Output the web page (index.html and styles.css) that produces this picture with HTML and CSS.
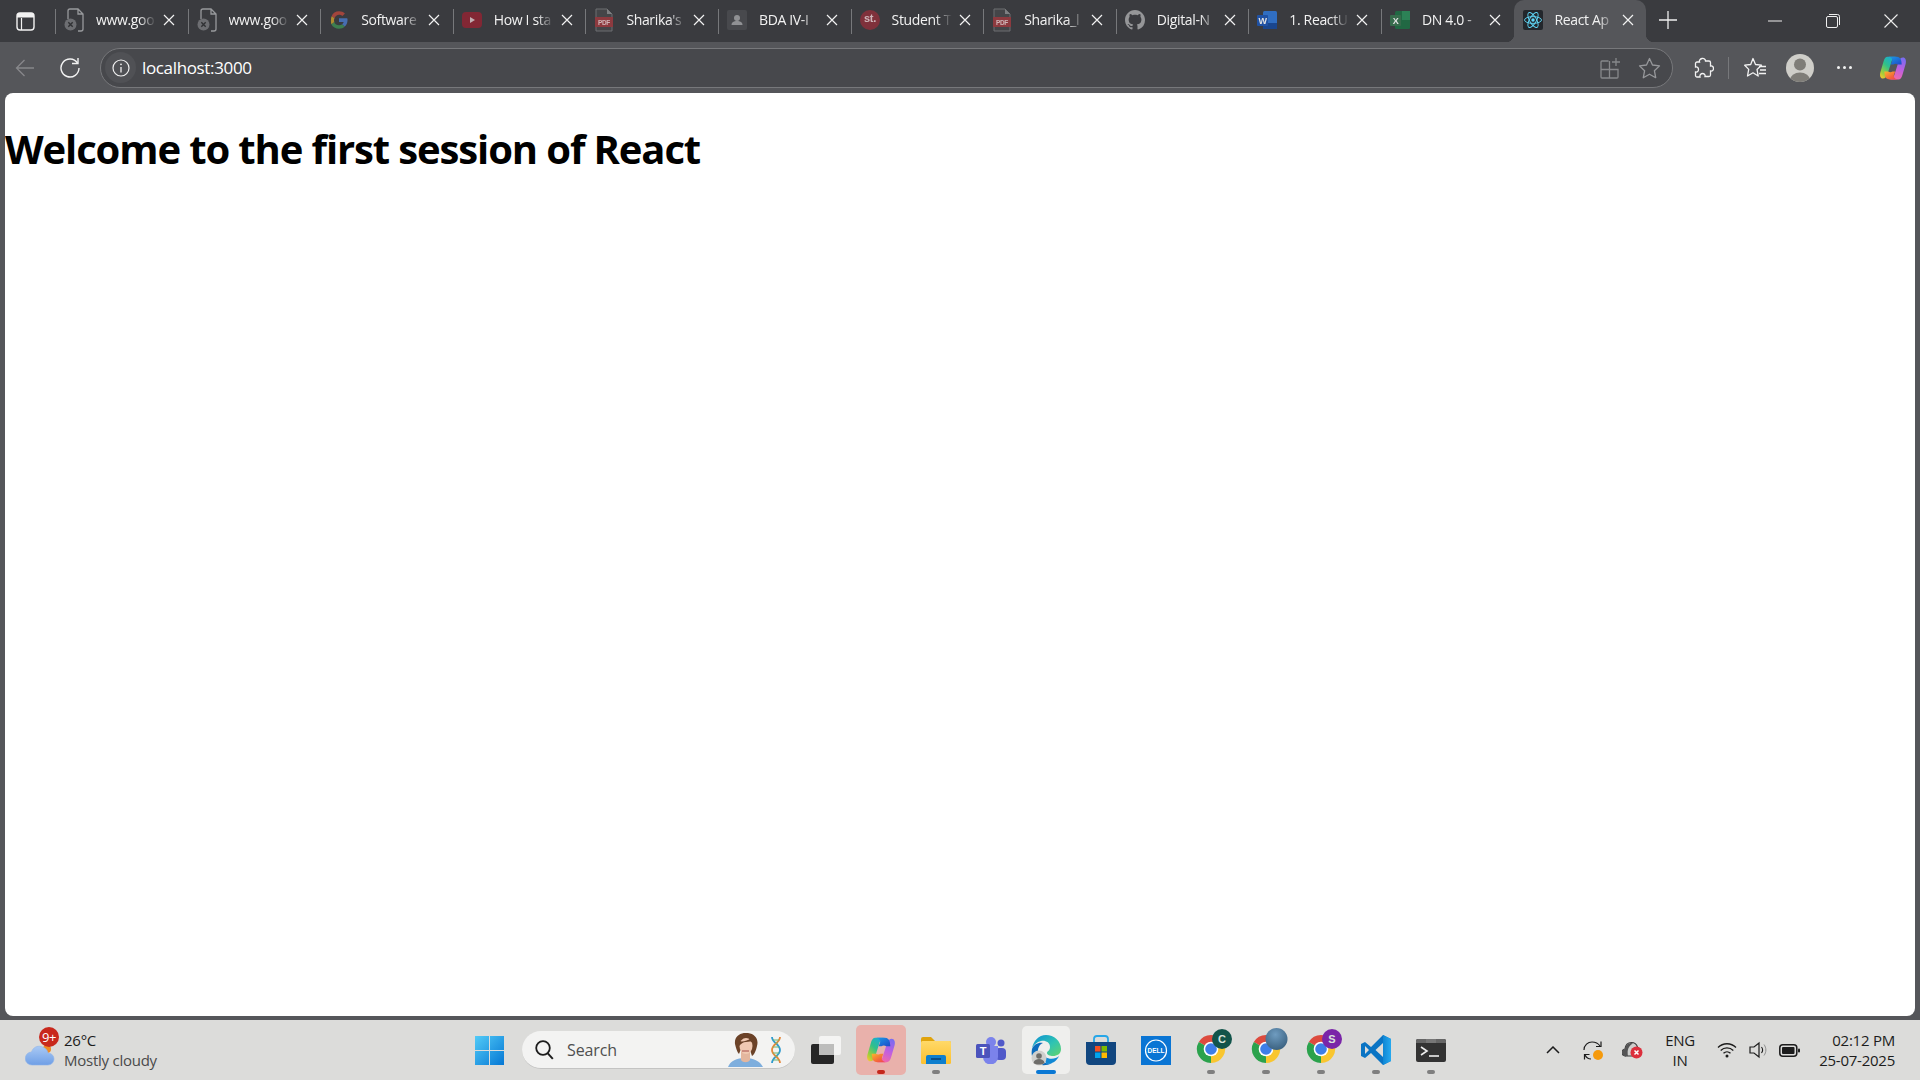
FILE: index.html
```html
<!DOCTYPE html>
<html lang="en">
<head>
<meta charset="utf-8">
<title>React App</title>
<link rel="stylesheet" href="styles.css">
</head>
<body>
<svg class="defs" width="0" height="0" aria-hidden="true">
  <defs>
    <linearGradient id="cop1" x1=".8" y1="0" x2=".1" y2="1"><stop offset="0" stop-color="#18a8e0"/><stop offset=".45" stop-color="#2fc08a"/><stop offset=".8" stop-color="#9fcf3a"/><stop offset="1" stop-color="#f7c531"/></linearGradient>
    <linearGradient id="cop2" x1=".7" y1="0" x2=".3" y2="1"><stop offset="0" stop-color="#7b6cf0"/><stop offset=".5" stop-color="#c05fe0"/><stop offset="1" stop-color="#f56aa5"/></linearGradient>
    <linearGradient id="cop3" x1="0" y1="0" x2="1" y2="1"><stop offset="0" stop-color="#f9b62c"/><stop offset=".6" stop-color="#f5683a"/><stop offset="1" stop-color="#ee3f5e"/></linearGradient>
    <linearGradient id="cop4" x1="0" y1="0" x2="1" y2="1"><stop offset="0" stop-color="#1c9be6"/><stop offset="1" stop-color="#1f49c8"/></linearGradient>
    <linearGradient id="edge1" x1="0" y1="0" x2="1" y2="1"><stop offset="0" stop-color="#0c8fd6"/><stop offset=".55" stop-color="#2fc4b2"/><stop offset="1" stop-color="#63d36c"/></linearGradient>
    <linearGradient id="win" x1="0" y1="0" x2="1" y2="1"><stop offset="0" stop-color="#52cbf7"/><stop offset="1" stop-color="#0577d4"/></linearGradient>
    <linearGradient id="cloud" x1="0" y1="0" x2="0" y2="1"><stop offset="0" stop-color="#a9c9f4"/><stop offset="1" stop-color="#6f9fe6"/></linearGradient>
    <linearGradient id="vs" x1="0" y1="0" x2="1" y2="0"><stop offset="0" stop-color="#0f86d4"/><stop offset="1" stop-color="#26a9ef"/></linearGradient>
    <linearGradient id="folder" x1="0" y1="0" x2="0" y2="1"><stop offset="0" stop-color="#ffd968"/><stop offset="1" stop-color="#fcc02f"/></linearGradient>
    <radialGradient id="ball" cx=".45" cy=".3" r=".8"><stop offset="0" stop-color="#6f9cc0"/><stop offset="1" stop-color="#345a78"/></radialGradient>
    <symbol id="i-doc" viewBox="0 0 20 24"><path d="M7 1h7l5 5v15a2 2 0 0 1-2 2h-3M4 11V3a2 2 0 0 1 2-2h1M14 1v5h5" fill="none" stroke="#a9aaad" stroke-width="1.3"/><circle cx="6.5" cy="16.5" r="6" fill="#77787b"/><path d="M4.3 14.3l4.4 4.4m0-4.4l-4.4 4.4" stroke="#2f3033" stroke-width="1.4"/></symbol>
    <symbol id="i-pdf" viewBox="0 0 20 24"><path d="M2 1h11l5 5v17H2z" fill="#46474a" stroke="#77787b"/><path d="M13 1v5h5" fill="#8a8b8e"/><rect x="1" y="9" width="18" height="10" fill="#9c3a3f"/><text x="10" y="17" class="svg-pdf" text-anchor="middle">PDF</text></symbol>
    <symbol id="i-chrome" viewBox="0 0 32 32"><path d="M16 16L3 8.500A15 15 0 0 1 29 8.500z" fill="#dd4b3e"/><path d="M16 16L29 8.500A15 15 0 0 1 16 31z" fill="#f9c62f"/><path d="M16 16V31A15 15 0 0 1 3 8.500z" fill="#2ba24c"/><circle cx="16" cy="16" r="7.800" fill="#fff"/><circle cx="16" cy="16" r="6.200" fill="#3d7ee8"/></symbol>
    <symbol id="i-copilot" viewBox="0 0 32 32"><path d="M10 3H20C17 3 15.500 5 14.500 8L10 22C9 26 7 28 4.500 28 2 28 .5 25 1.500 21L5 9C6 5 7.500 3 10 3Z" fill="url(#cop1)"/><path d="M22 29H12C15 29 16.500 27 17.500 24L22 10C23 6 25 4 27.500 4 30 4 31.500 7 30.500 11L27 23C26 27 24.500 29 22 29Z" fill="url(#cop2)"/><path d="M11 3H20C23 3 25 5 25.500 8L26 12H21.500C20 11 18 11 16.500 12H13.500L15 8C15.700 5.500 14 3.500 11 3Z" fill="url(#cop4)"/><path d="M21 29H12C9 29 7 27 6.500 24L6 20H10.500C12 21 14 21 15.500 20H18.500L17 24C16.300 26.500 18 28.500 21 29Z" fill="url(#cop3)"/></symbol>
    <symbol id="i-x" viewBox="0 0 12 12"><path d="M1 1l10 10M11 1L1 11" stroke="#f2f2f2" stroke-width="1.200"/></symbol>
  </defs>
</svg>

<header class="tabstrip">
  <div class="side-btn">
    <svg width="19" height="19" viewBox="0 0 19 19"><rect x="1" y="1" width="17" height="17" rx="3" fill="none" stroke="#f2f2f2" stroke-width="1.4"/><path d="M1 5.500h17V4a3 3 0 0 0-3-3H4a3 3 0 0 0-3 3z" fill="#f2f2f2"/><path d="M5.500 6v12" stroke="#f2f2f2" stroke-width="1.200"/></svg>
  </div>
  <nav class="tabs">
    <div class="tab"><svg class="fav" viewBox="0 0 20 24"><use href="#i-doc"/></svg><span class="label">www.goo</span><svg class="close" viewBox="0 0 12 12"><use href="#i-x"/></svg></div>
    <div class="tab"><svg class="fav" viewBox="0 0 20 24"><use href="#i-doc"/></svg><span class="label">www.goo</span><svg class="close" viewBox="0 0 12 12"><use href="#i-x"/></svg></div>
    <div class="tab"><svg class="fav" viewBox="0 0 48 48"><path d="M6.300 14.700l7 5.100C15.100 15 19.200 11.500 24 11.500c3.100 0 6 1.100 8.200 3l6-6C34.500 5.100 29.500 3 24 3 16 3 9.100 7.600 6.300 14.700z" fill="#b5473c"/><path d="M24 45c5.400 0 10.300-2 14-5.400l-6.500-5.500C29.400 35.700 26.800 36.500 24 36.500c-5.300 0-9.700-3.100-11.300-8L5.700 33.900C9 40.500 16 45 24 45z" fill="#3e8a53"/><path d="M6.300 14.700C4.200 18.800 4.200 29.500 5.700 33.900l7-5.400c-.9-3-1-6 .6-8.700z" fill="#c39a2d"/><path d="M43.600 20H24v8.500h11.300c-.8 2.300-2 4.200-3.800 5.600L38 39.600c4-3.700 6.500-9.100 6.500-15.600 0-1.400-.3-2.700-.9-4z" fill="#4a77c4"/></svg><span class="label">Software</span><svg class="close" viewBox="0 0 12 12"><use href="#i-x"/></svg></div>
    <div class="tab"><svg class="fav" viewBox="0 0 20 20"><rect y="2" width="20" height="16" rx="4" fill="#8f2433"/><path d="M8 7l5 3-5 3z" fill="#d9c2c6"/></svg><span class="label">How I sta</span><svg class="close" viewBox="0 0 12 12"><use href="#i-x"/></svg></div>
    <div class="tab"><svg class="fav" viewBox="0 0 20 24"><use href="#i-pdf"/></svg><span class="label">Sharika's</span><svg class="close" viewBox="0 0 12 12"><use href="#i-x"/></svg></div>
    <div class="tab"><svg class="fav" viewBox="0 0 20 20"><rect width="20" height="20" rx="2" fill="#4b4c50"/><circle cx="10" cy="8" r="3" fill="#a0a1a3"/><path d="M4.500 15c0-3 2.500-4 5.500-4s5.500 1 5.500 4z" fill="#a0a1a3"/></svg><span class="label">BDA IV-I</span><svg class="close" viewBox="0 0 12 12"><use href="#i-x"/></svg></div>
    <div class="tab"><svg class="fav" viewBox="0 0 20 20"><circle cx="10" cy="10" r="10" fill="#8c303b"/><text x="10" y="12" class="svg-st" text-anchor="middle">st.</text></svg><span class="label">Student T</span><svg class="close" viewBox="0 0 12 12"><use href="#i-x"/></svg></div>
    <div class="tab"><svg class="fav" viewBox="0 0 20 24"><use href="#i-pdf"/></svg><span class="label">Sharika_l</span><svg class="close" viewBox="0 0 12 12"><use href="#i-x"/></svg></div>
    <div class="tab"><svg class="fav" viewBox="0 0 16 16"><path fill="#a5a6a8" d="M8 0C3.580 0 0 3.580 0 8c0 3.540 2.290 6.530 5.470 7.590.4.070.55-.17.55-.38 0-.19-.01-.82-.01-1.490-2.010.37-2.530-.49-2.690-.94-.09-.23-.48-.94-.82-1.130-.28-.15-.68-.52-.01-.53.63-.01 1.080.58 1.230.82.720 1.210 1.870.87 2.330.66.070-.52.280-.87.510-1.070-1.780-.2-3.640-.89-3.640-3.950 0-.87.310-1.590.820-2.150-.08-.2-.36-1.020.08-2.120 0 0 .67-.21 2.200.82.640-.18 1.320-.27 2-.27s1.360.09 2 .27c1.530-1.040 2.200-.82 2.200-.82.440 1.100.160 1.920.080 2.120.51.560.820 1.270.820 2.150 0 3.070-1.870 3.750-3.650 3.950.290.250.540.730.540 1.480 0 1.070-.01 1.930-.01 2.200 0 .21.150.46.550.38A8.010 8.010 0 0 0 16 8c0-4.420-3.580-8-8-8z"/></svg><span class="label">Digital-N</span><svg class="close" viewBox="0 0 12 12"><use href="#i-x"/></svg></div>
    <div class="tab"><svg class="fav" viewBox="0 0 20 20"><rect x="6" y="1" width="14" height="18" rx="1.500" fill="#2f78d8"/><rect x="6" y="13" width="14" height="6" fill="#15489b"/><rect y="5" width="11" height="11" rx="1" fill="#1b55b5"/><text x="5.500" y="13.500" class="svg-office" text-anchor="middle">W</text></svg><span class="label">1. ReactU</span><svg class="close" viewBox="0 0 12 12"><use href="#i-x"/></svg></div>
    <div class="tab"><svg class="fav" viewBox="0 0 20 20"><rect x="5" y="1" width="15" height="18" rx="1.500" fill="#1d7044"/><rect x="12" y="1" width="8" height="9" fill="#2a8f5b"/><rect y="5" width="11" height="11" rx="1" fill="#37744f"/><text x="5.500" y="13.500" class="svg-office" text-anchor="middle">X</text></svg><span class="label">DN 4.0 -</span><svg class="close" viewBox="0 0 12 12"><use href="#i-x"/></svg></div>
    <div class="tab active"><svg class="fav" viewBox="0 0 20 20"><rect width="20" height="20" rx="2" fill="#23272c"/><g fill="none" stroke="#61dafb" stroke-width=".9"><ellipse cx="10" cy="10" rx="8.500" ry="3.400"/><ellipse cx="10" cy="10" rx="8.500" ry="3.400" transform="rotate(60 10 10)"/><ellipse cx="10" cy="10" rx="8.500" ry="3.400" transform="rotate(120 10 10)"/></g><circle cx="10" cy="10" r="1.700" fill="#61dafb"/></svg><span class="label">React Ap</span><svg class="close" viewBox="0 0 12 12"><use href="#i-x"/></svg></div>
  </nav>
  <div class="newtab"><svg width="18" height="18" viewBox="0 0 18 18"><path d="M9 0v18M0 9h18" stroke="#efefef" stroke-width="1.300"/></svg></div>
  <div class="spacer"></div>
  <div class="winbtn"><svg width="14" height="14" viewBox="0 0 14 14"><path d="M0 7h14" stroke="#eee" stroke-width="1"/></svg></div>
  <div class="winbtn"><svg width="14" height="14" viewBox="0 0 14 14"><rect x=".5" y="2.500" width="11" height="11" rx="1.500" fill="none" stroke="#eee"/><path d="M3 .5h8.500a2 2 0 0 1 2 2V11" fill="none" stroke="#eee"/></svg></div>
  <div class="winbtn"><svg width="14" height="14" viewBox="0 0 14 14"><path d="M.5.500l13 13m0-13l-13 13" stroke="#eee" stroke-width="1.100"/></svg></div>
</header>

<div class="toolbar">
  <div class="tb-btn"><svg width="20" height="18" viewBox="0 0 20 18"><path d="M19 9H1.500M9.500 1L1.500 9l8 8" fill="none" stroke="#87888b" stroke-width="1.300"/></svg></div>
  <div class="tb-btn"><svg width="20" height="21" viewBox="0 0 20 21"><path d="M17.500 6A9 9 0 1 0 19 11" fill="none" stroke="#f2f2f2" stroke-width="1.400"/><path d="M18 1v5.500h-6" fill="none" stroke="#f2f2f2" stroke-width="1.400"/></svg></div>
  <div class="address">
    <div class="info"><svg width="18" height="18" viewBox="0 0 18 18"><circle cx="9" cy="9" r="8" fill="none" stroke="#f0f0f0" stroke-width="1.200"/><path d="M9 8v5.500" stroke="#f0f0f0" stroke-width="1.300"/><circle cx="9" cy="5.300" r=".9" fill="#f0f0f0"/></svg></div>
    <span class="url">localhost:3000</span>
    <div class="addr-actions">
      <svg width="22" height="22" viewBox="0 0 22 22"><path d="M9.500 4H3a1 1 0 0 0-1 1v15a1 1 0 0 0 1 1h15a1 1 0 0 0 1-1v-7.500H2M10.500 4v17" fill="none" stroke="#87888b" stroke-width="1.300"/><path d="M17 1v8M13 5h8" stroke="#87888b" stroke-width="1.300"/></svg>
      <svg width="23" height="22" viewBox="0 0 23 22"><path d="M11.500 1.500l3 6.500 7 .9-5.100 4.800 1.300 7-6.200-3.500-6.200 3.500 1.300-7L1.500 8.900l7-.9z" fill="none" stroke="#97989b" stroke-width="1.300" stroke-linejoin="round"/></svg>
    </div>
  </div>
  <div class="tb-right">
    <div class="tr-slot ext"><svg width="20" height="22" viewBox="0 0 20 22"><path d="M8 1.500c2-.5 3.500 1 3.500 2.500h3.500a1.500 1.500 0 0 1 1.500 1.500V9c2-.5 3 1 3 2.500s-1 3-3 2.500v4a1.500 1.500 0 0 1-1.500 1.500H11c.5-2-1-3-2.500-3S5.500 18 6 20H3a1.500 1.500 0 0 1-1.500-1.500V15c2 .5 3-1 3-2.500S3.500 9.500 1.500 10V6.500A1.500 1.500 0 0 1 3 5h2.500C5 3.500 6 2 8 1.500z" fill="none" stroke="#f2f2f2" stroke-width="1.300"/></svg></div>
    <div class="tb-div"></div>
    <div class="tr-slot fav-btn"><svg width="23" height="22" viewBox="0 0 23 22"><path d="M9 1.500l2.500 6 6 .7-4.500 4.200 1.200 6.600-5.200-3.200-5.500 3.200 1.200-6.600L.7 8.200l6-.7z" fill="none" stroke="#f2f2f2" stroke-width="1.300" stroke-linejoin="round"/><path d="M15 9.500h7M16 13h6M15 16.500h7" stroke="#f2f2f2" stroke-width="1.300"/></svg></div>
    <div class="tr-slot avatar-slot"><svg width="28" height="28" viewBox="0 0 28 28"><defs><clipPath id="av"><circle cx="14" cy="14" r="14"/></clipPath></defs><circle cx="14" cy="14" r="14" fill="#cfcec9"/><g clip-path="url(#av)" fill="#7f7d78"><circle cx="14" cy="10.500" r="6"/><ellipse cx="14" cy="26" rx="10" ry="7.500"/></g></svg></div>
    <div class="tr-slot dots"><span></span><span></span><span></span></div>
    <div class="tr-slot copilot-slot"><svg width="28" height="30" viewBox="0 0 32 32"><use href="#i-copilot"/></svg></div>
  </div>
</div>

<main class="viewport">
  <div class="page"><h1>Welcome to the first session of React</h1></div>
</main>

<footer class="taskbar">
  <div class="weather">
    <div class="weather-icon">
      <svg width="30" height="22" viewBox="0 0 30 22"><circle cx="22" cy="5" r="4" fill="#f08a24"/><path d="M7 21a6.500 6.500 0 0 1-.5-13C8 3.500 12 1.500 16 2.500c4 .8 6.500 3.500 7 6.500a6 6 0 0 1 0 12z" fill="url(#cloud)" stroke="#8fb3ea" stroke-width=".6"/></svg>
      <span class="badge">9+</span>
    </div>
    <div class="weather-text"><span class="temp">26°C</span><span class="cond">Mostly cloudy</span></div>
  </div>
  <div class="start"><svg width="29" height="29" viewBox="0 0 29 29"><path d="M0 0h14v14H0zM15 0h14v14H15zM0 15h14v14H0zM15 15h14v14H15z" fill="url(#win)"/></svg></div>
  <div class="search">
    <svg width="19" height="20" viewBox="0 0 19 20"><circle cx="8" cy="8" r="6.800" fill="none" stroke="#1c1c1c" stroke-width="1.800"/><path d="M12.800 13.300l5 5.500" stroke="#1c1c1c" stroke-width="2"/></svg>
    <span class="search-text">Search</span>
    <svg class="portrait" width="36" height="34" viewBox="0 0 36 34"><path d="M0 34c2-6 9-9 17-9s15 3 18 9z" fill="#7eaedd"/><path d="M13 18h9v9c-2 3-7 3-9 0z" fill="#e3b69e"/><path d="M7 11C6 3 13-1 20 0c7 1 11 6 9 13-1 5-3 9-5 10l-2-6-9-1-2 5c-2-2-3-6-4-10z" fill="#6b4228"/><ellipse cx="18" cy="13" rx="6.500" ry="8" fill="#f0c9b2"/><path d="M11 8c3 1 9 0 12-3l2 6c-2-4-4-2-7-2-3 0-5 2-7 4z" fill="#6b4228"/><path d="M14 18h7" stroke="#b3625c" stroke-width="1.200"/></svg>
    <svg class="dna" width="12" height="28" viewBox="0 0 12 28"><path d="M2 1c0 6 8 7 8 13s-8 7-8 13" fill="none" stroke="#2f9bd0" stroke-width="1.800"/><path d="M10 1c0 6-8 7-8 13s8 7 8 13" fill="none" stroke="#e6883a" stroke-width="1.800"/><path d="M3 4h6M5 7h3M3 11h6M3 17h6M5 20h3M3 24h6" stroke="#6ab56f" stroke-width="1"/></svg>
  </div>
  <div class="apps">
    <div class="app"><svg width="30" height="28" viewBox="0 0 30 28"><rect x="8" width="22" height="19" rx="2" fill="#f4f4f3"/><rect y="8" width="23" height="20" rx="2" fill="#262626"/><rect x="8" y="8" width="15" height="11" fill="#bdbdbc"/></svg></div>
    <div class="app tile-copilot"><svg width="30" height="30" viewBox="0 0 32 32"><use href="#i-copilot"/></svg><span class="pill red"></span></div>
    <div class="app"><svg width="30" height="27" viewBox="0 0 30 27"><path d="M0 2a2 2 0 0 1 2-2h8l4 4h14a2 2 0 0 1 2 2v4H0z" fill="#e0a30c"/><rect y="4" width="30" height="23" rx="1.500" fill="url(#folder)"/><path d="M5 27v-7a2 2 0 0 1 2-2h16a2 2 0 0 1 2 2v7z" fill="#0e7fce"/><path d="M10 22h10" stroke="#063f75" stroke-width="1.500"/></svg><span class="pill"></span></div>
    <div class="app"><svg width="30" height="27" viewBox="0 0 30 27"><circle cx="25" cy="6" r="3.500" fill="#5059c9"/><rect x="19" y="11" width="11" height="12" rx="4" fill="#5059c9"/><circle cx="15" cy="5" r="5" fill="#7b83eb"/><path d="M7 9h15v11a7.500 7.500 0 0 1-15 0z" fill="#7b83eb"/><rect y="7" width="14" height="14" rx="1.500" fill="#4b53bc"/><text x="7" y="18" class="svg-teams" text-anchor="middle">T</text></svg></div>
    <div class="app tile-edge"><svg width="30" height="31" viewBox="0 0 30 31"><path d="M1 14C2 6 8 0 15 0c8 0 15 6 15 14 0 5-4 7-8 7-3 0-6-1-6-3 0-2 3-2 3-6 0-5-5-7-9-6C6 7 2 10 1 14z" fill="url(#edge1)"/><path d="M1 14c2-5 7-7 11-6-3 1-6 5-5 11 1 6 7 11 14 9-5 3-12 3-16 0C1 25 0 19 1 14z" fill="#0b6cbd"/><path d="M16 29c5 0 10-3 12-8-3 3-9 4-14 1 0 3 0 6 2 7z" fill="#1189d5"/><circle cx="8" cy="23" r="7.500" fill="#cfcfcd"/><circle cx="8" cy="21" r="2.800" fill="#6e6d6a"/><path d="M2.500 28c.5-3 3-4 5.500-4s5 1 5.500 4c-3 2-8 2-11 0z" fill="#6e6d6a"/></svg><span class="pill blue"></span></div>
    <div class="app"><svg width="30" height="30" viewBox="0 0 30 30"><path d="M8 8V4a3 3 0 0 1 3-3h8a3 3 0 0 1 3 3v4" fill="none" stroke="#27a7e8" stroke-width="1.800"/><path d="M0 7h30v19a4 4 0 0 1-4 4H4a4 4 0 0 1-4-4z" fill="#11467f"/><rect x="9" y="11" width="5.500" height="5.500" fill="#f25022"/><rect x="15.500" y="11" width="5.500" height="5.500" fill="#7fba00"/><rect x="9" y="17.500" width="5.500" height="5.500" fill="#00a4ef"/><rect x="15.500" y="17.500" width="5.500" height="5.500" fill="#ffb900"/></svg></div>
    <div class="app"><svg width="30" height="29" viewBox="0 0 30 29"><rect width="30" height="29" fill="#0a75d4"/><circle cx="15" cy="14.500" r="10.500" fill="none" stroke="#fff" stroke-width="1.200"/><text x="15" y="17" class="svg-dell" text-anchor="middle">DELL</text></svg></div>
    <div class="app"><svg class="over" width="34" height="34" viewBox="0 0 34 34"><use href="#i-chrome" x="2" y="1" width="30" height="30"/><circle cx="28" cy="6" r="10" fill="#11544a"/><text x="28" y="10" class="svg-letter" text-anchor="middle">C</text></svg><span class="pill"></span></div>
    <div class="app"><svg class="over" width="34" height="34" viewBox="0 0 34 34"><use href="#i-chrome" x="2" y="1" width="30" height="30"/><circle cx="27.500" cy="6" r="11" fill="url(#ball)"/></svg><span class="pill"></span></div>
    <div class="app"><svg class="over" width="34" height="34" viewBox="0 0 34 34"><use href="#i-chrome" x="2" y="1" width="30" height="30"/><circle cx="28" cy="6" r="10" fill="#7a25a8"/><text x="28" y="10" class="svg-letter" text-anchor="middle">S</text></svg><span class="pill"></span></div>
    <div class="app"><svg width="30" height="30" viewBox="0 0 30 30"><path d="M22 0l8 4v22l-8 4-12-12-6 5-4-2v-12l4-2 6 5z" fill="#0a74c4"/><path d="M22 0l8 4v22l-8 4z" fill="url(#vs)"/><path d="M22 8l-7.500 7 7.500 7z" fill="#dcdcda"/><path d="M4 11l4 4-4 4z" fill="#dcdcda"/></svg><span class="pill"></span></div>
    <div class="app"><svg width="30" height="23" viewBox="0 0 30 23"><rect width="30" height="23" rx="2" fill="#333"/><path d="M0 2a2 2 0 0 1 2-2h8v4H0z" fill="#666"/><path d="M20 0h8a2 2 0 0 1 2 2v2H20z" fill="#666"/><path d="M10 0h10v4H10z" fill="#777"/><path d="M5 8l6 4-6 4" fill="none" stroke="#eee" stroke-width="1.600"/><path d="M13 17h10" stroke="#eee" stroke-width="1.600"/></svg><span class="pill"></span></div>
  </div>
  <div class="tray">
    <div class="t-caret"><svg width="14" height="8" viewBox="0 0 14 8"><path d="M1 7l6-6 6 6" fill="none" stroke="#1c1c1c" stroke-width="1.500"/></svg></div>
    <div class="t-sync"><svg width="21" height="21" viewBox="0 0 21 21"><path d="M1 10C1 5 5 2 9 2c3 0 6 1 8 4" fill="none" stroke="#1c1c1c" stroke-width="1.200"/><path d="M18 1.500V6.500H13" fill="none" stroke="#1c1c1c" stroke-width="1.200"/><path d="M2 15c1 2 3 4 6 4" fill="none" stroke="#1c1c1c" stroke-width="1.200"/><path d="M1.500 19.500V14.500H6.500" fill="none" stroke="#1c1c1c" stroke-width="1.200"/><circle cx="15" cy="15" r="5" fill="#f59a0c"/></svg></div>
    <div class="t-cloud"><svg width="21" height="18" viewBox="0 0 21 18"><path d="M4 15a3.500 3.500 0 0 1-1-7c.5-4 3-6.500 6.500-6.500 3 0 5 1.500 6 4.500 1 2 1 5-1 9z" fill="#cfcfcd" stroke="#3b3b3b" stroke-width="1.200"/><path d="M9.500 2c-3.500 0-6 2.500-6.500 6a3.500 3.500 0 0 0 1 7h2c-1-5 0-10 5-12.500z" fill="#555"/><circle cx="14.500" cy="11.500" r="6" fill="#dc2f3c"/><path d="M12.500 9.500l4 4m0-4l-4 4" stroke="#fff" stroke-width="1.500"/></svg></div>
    <div class="t-lang"><span>ENG</span><span>IN</span></div>
    <div class="t-wifi"><svg width="20" height="16" viewBox="0 0 20 16"><path d="M1 5.500c5-5 13-5 18 0M3.700 8.500c3.500-3.500 9-3.500 12.600 0M6.500 11.300c2-2 5-2 7 0" fill="none" stroke="#1c1c1c" stroke-width="1.300"/><circle cx="10" cy="14" r="1.500" fill="#1c1c1c"/></svg></div>
    <div class="t-sound"><svg width="20" height="18" viewBox="0 0 20 18"><path d="M1 6h4l5-4v14l-5-4H1z" fill="none" stroke="#1c1c1c" stroke-width="1.200"/><path d="M12.500 6c1.500 2 1.500 4 0 6" fill="none" stroke="#1c1c1c" stroke-width="1.100"/><path d="M15 3.500c2.500 3.500 2.500 7.500 0 11" fill="none" stroke="#8d8d8d" stroke-width="1"/></svg></div>
    <div class="t-batt"><svg width="21" height="13" viewBox="0 0 21 13"><rect x=".8" y=".8" width="17" height="11.400" rx="3" fill="none" stroke="#1c1c1c" stroke-width="1.500"/><rect x="3" y="3" width="12.500" height="7" rx="1" fill="#1c1c1c"/><rect x="19" y="4.500" width="2" height="4" rx="1" fill="#1c1c1c"/></svg></div>
    <div class="t-clock"><span>02:12 PM</span><span>25-07-2025</span></div>
  </div>
</footer>
</body>
</html>
```

FILE: styles.css
```css
* { box-sizing: border-box; }
html, body { margin: 0; height: 100%; }
body {
  width: 1920px;
  height: 1080px;
  overflow: hidden;
  display: flex;
  flex-direction: column;
  background: #55565a;
  font-family: "Open Sans", "Noto Sans", sans-serif;
}
.defs { position: absolute; }

/* tab strip */
.tabstrip { height: 42px; background: #3a3b3f; display: flex; align-items: stretch; color: #f2f2f2; }
.side-btn { width: 55px; display: flex; align-items: center; padding-left: 16px; }
.tabs { display: flex; }
.tab {
  width: 132.6px;
  position: relative;
  display: flex;
  align-items: center;
  padding: 0 0 3px 9px;
  font-size: 14px;
  letter-spacing: -.35px;
}
.tab::before { content: ""; position: absolute; left: 0; top: 9px; height: 25px; width: 1px; background: #77787b; }
.tab.active::before { display: none; }
.tab.active { background: #55565a; border-radius: 10px 10px 0 0; }
.tab.active::after {
  content: "";
  position: absolute;
  left: -8px; right: -8px; bottom: 0; height: 8px;
  background:
    radial-gradient(circle at 0 0, #3a3b3f 8px, #55565a 8.5px) left / 8px 8px no-repeat,
    radial-gradient(circle at 100% 0, #3a3b3f 8px, #55565a 8.5px) right / 8px 8px no-repeat;
}
.fav { width: 20px; height: 24px; flex: none; opacity: .85; }
.active .fav { opacity: 1; }
.label {
  width: 60px;
  margin-left: 12px;
  white-space: nowrap;
  overflow: hidden;
  -webkit-mask-image: linear-gradient(to right, #000 72%, transparent 100%);
  mask-image: linear-gradient(to right, #000 72%, transparent 100%);
}
.close { width: 12px; height: 12px; flex: none; margin-left: 7px; }
.newtab { width: 44px; display: flex; align-items: center; justify-content: center; padding-bottom: 2px; }
.spacer { flex: 1; }
.winbtn { width: 58px; display: flex; align-items: center; justify-content: center; }

/* toolbar */
.toolbar { height: 51px; background: #55565a; display: flex; align-items: center; padding: 0 0 0 2px; }
.tb-btn { width: 45.5px; display: flex; justify-content: center; }
.address {
  width: 1573px;
  height: 40px;
  margin: 0 0 0 7px;
  display: flex;
  align-items: center;
  background: #47484c;
  border: 1px solid #77787b;
  border-radius: 20px;
  padding: 0 11px 0 4px;
  color: #fff;
}
.info { width: 31px; height: 31px; border-radius: 50%; background: #505155; display: flex; align-items: center; justify-content: center; }
.url { margin-left: 6px; font-size: 17px; letter-spacing: -.35px; }
.addr-actions { margin-left: auto; display: flex; align-items: center; gap: 17px; }
.tb-right { flex: 1; display: flex; align-items: center; padding-left: 19px; }
.tr-slot { display: flex; justify-content: center; align-items: center; }
.ext { width: 24px; }
.tb-div { width: 1px; height: 22px; background: #77787b; margin: 0 14px 0 12px; }
.fav-btn { width: 24px; }
.avatar-slot { width: 28px; margin-left: 19px; }
.dots { width: 18px; margin-left: 21px; gap: 3px; }
.dots span { width: 3px; height: 3px; border-radius: 50%; background: #f2f2f2; }
.copilot-slot { width: 28px; margin-left: 26px; }

/* page */
.viewport { flex: 1; padding: 0 5px 4px; min-height: 0; }
.page { height: 100%; background: #fff; border-radius: 8px; overflow: hidden; }
h1 {
  margin: 29px 0 0;
  font-size: 40px;
  line-height: 54px;
  font-weight: 700;
  color: #000;
  letter-spacing: -1.12px;
  white-space: nowrap;
}

/* taskbar */
.taskbar { height: 60px; background: #dcdcda; display: flex; align-items: center; color: #1c1c1c; }
.weather { width: 475px; padding-left: 25px; display: flex; align-items: center; }
.weather-icon { position: relative; width: 30px; height: 28px; margin-top: 3px; display: flex; align-items: flex-end; }
.badge {
  position: absolute;
  left: 14px; top: -11px;
  width: 20px; height: 20px;
  border-radius: 50%;
  background: #c8281c;
  color: #fff;
  font-size: 13px;
  line-height: 20px;
  text-align: center;
  letter-spacing: -.5px;
}
.weather-text { margin-left: 9px; display: flex; flex-direction: column; font-size: 15px; line-height: 20px; letter-spacing: -.25px; margin-top: -1px; }
.cond { color: #4a4a4a; }
.start { display: flex; width: 29px; }
.search {
  width: 273px;
  height: 38px;
  margin-left: 18px;
  display: flex;
  align-items: center;
  padding: 0 13px 0 13px;
  background: #f3f3f2;
  border-radius: 19px;
  border-bottom: 1px solid #c4c4c3;
}
.search-text { margin-left: 13px; font-size: 16px; color: #4f4f4f; letter-spacing: -.1px; }
.portrait { margin-left: auto; }
.dna { margin-left: 6px; }
.apps { display: flex; margin-left: 3.5px; height: 60px; }
.app { width: 55px; position: relative; display: flex; align-items: center; justify-content: center; }
.tile-copilot::before, .tile-edge::before { content: ""; position: absolute; z-index: 0; border-radius: 5px; }
.tile-copilot::before { left: 2.500px; right: 2.500px; top: 5px; bottom: 5px; background: #e9b1ab; }
.tile-edge::before { left: 3.500px; right: 3.500px; top: 6px; bottom: 6px; background: #efefed; }
.app svg { position: relative; z-index: 1; }
.app svg.over { overflow: visible; }
.pill { position: absolute; z-index: 2; bottom: 6px; left: 50%; width: 8px; height: 4px; margin-left: -4px; border-radius: 2px; background: #7f7f7f; }
.pill.red { background: #c4281c; }
.pill.blue { width: 20px; margin-left: -10px; background: #0a78d4; }
.tray { flex: 1; display: flex; align-items: center; padding-left: 74.500px; font-size: 15px; line-height: 20px; letter-spacing: -.3px; }
.t-caret, .t-sync { width: 40px; display: flex; justify-content: center; }
.t-cloud { width: 38px; display: flex; justify-content: center; }
.t-lang { width: 58px; display: flex; flex-direction: column; align-items: center; margin-top: -1px; }
.t-wifi { width: 28px; margin-left: 4px; display: flex; justify-content: center; }
.t-sound { width: 28px; margin-left: 4px; display: flex; justify-content: center; }
.t-batt { width: 28px; margin-left: 2px; display: flex; justify-content: center; }
.t-clock { flex: 1; display: flex; flex-direction: column; align-items: flex-end; padding-right: 25px; letter-spacing: -.24px; }

/* svg text */
.svg-pdf { font: 700 6.500px "Liberation Sans", sans-serif; fill: #e9c8ca; }
.svg-st { font: 700 11px "Liberation Sans", sans-serif; fill: #e8c9cd; }
.svg-office { font: 700 9px "Liberation Sans", sans-serif; fill: #fff; }
.svg-teams { font: 700 11px "Liberation Sans", sans-serif; fill: #fff; }
.svg-dell { font: 700 6.500px "Liberation Sans", sans-serif; fill: #fff; }
.svg-letter { font: 700 11px "Liberation Sans", sans-serif; fill: #d9e2dc; }
```
